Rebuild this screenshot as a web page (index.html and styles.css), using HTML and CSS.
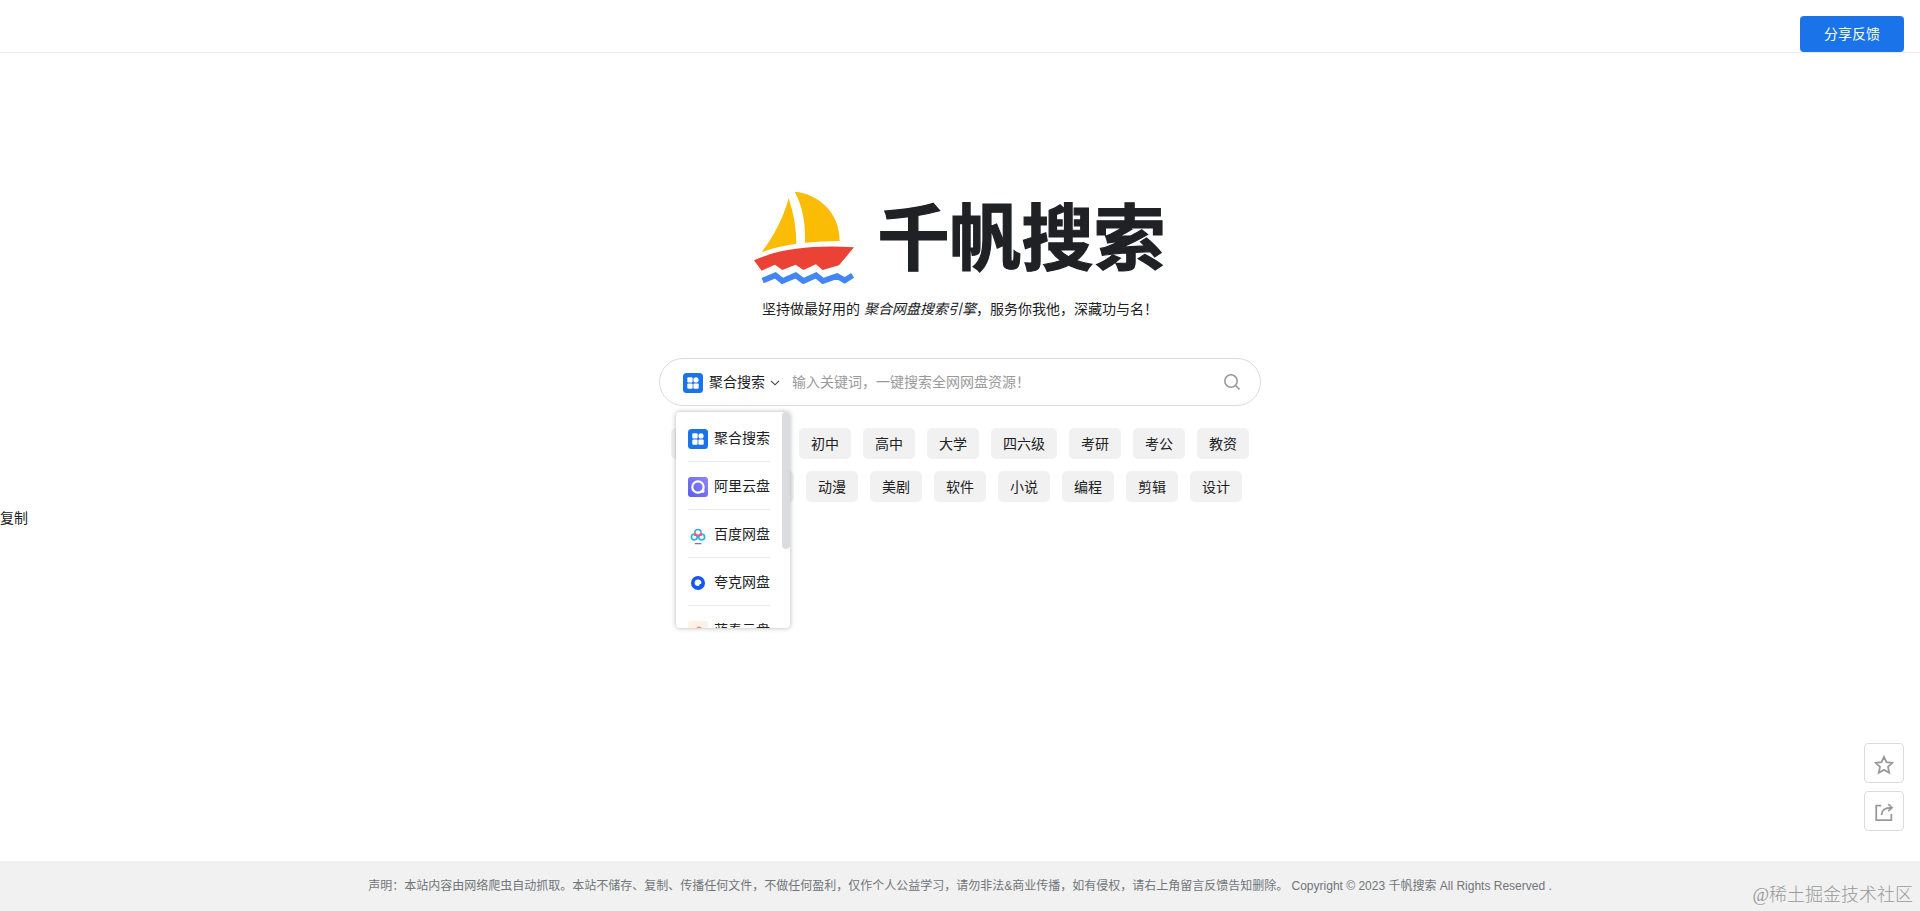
FILE: index.html
```html
<!DOCTYPE html>
<html lang="zh-CN">
<head>
    <meta charset="UTF-8">
    <meta name="viewport" content="width=device-width, initial-scale=1.0">
    <title>千帆搜索</title>
    <link rel="stylesheet" href="styles.css">
</head>
<body>
    <!-- shared icons -->
    <svg width="0" height="0" class="sprite">
        <symbol id="icon-all" viewBox="0 0 20 20">
            <rect width="20" height="20" rx="3.5" fill="#1a73e8"/>
            <rect x="4.3" y="4.3" width="5.3" height="5.3" rx="1" fill="#fff"/>
            <circle cx="13" cy="6.9" r="2.6" fill="#fff"/>
            <rect x="4.3" y="10.4" width="5.3" height="5.3" rx="1" fill="#fff"/>
            <rect x="10.4" y="10.4" width="5.3" height="5.3" rx="1" fill="#fff"/>
        </symbol>
    </svg>

    <header class="header">
        <button class="feedback">分享反馈</button>
    </header>

    <main class="main">
        <h1 class="logo">
            <svg class="logo-img" viewBox="27 30 300 279">
                <path fill="#fbbc05" d="M149 32C218 38 284 92 284 180Q230 180 180 185C182 130 174 78 149 32z"/>
                <path fill="#fbbc05" d="M131 52Q154 120 154 188Q100 195 50 213C84 170 114 115 131 52z"/>
                <path fill="#ea4335" d="M27 238C110 200 215 192 327 199L282 253L233 267L213 250L175 267L152 251L112 267L90 251L50 269z"/>
                <path fill="none" stroke="#4285f4" stroke-width="17" d="M53 299L91 283L112 300L152 283L175 300L213 283L234 300L276 285L299 298L323 283"/>
            </svg>
            <span>千帆搜索</span>
        </h1>
        <p class="slogan">坚持做最好用的 <em>聚合网盘搜索引擎</em>，服务你我他，深藏功与名！</p>

        <div class="search">
            <div class="current">
                <svg class="icon"><use href="#icon-all"/></svg>
                <span>聚合搜索</span>
                <svg class="arrow" viewBox="0 0 10 6"><path d="M1 .8l4 4 4-4"/></svg>
            </div>
            <input type="text" placeholder="输入关键词，一键搜索全网网盘资源！">
            <svg class="search-btn" viewBox="0 0 16 16"><circle cx="7" cy="7" r="6.2"/><path d="M11.3 11.3l4.2 4.2"/></svg>

            <div class="dropdown">
                <ul>
                    <li><svg class="icon"><use href="#icon-all"/></svg>聚合搜索</li>
                    <li>
                        <svg class="icon" viewBox="0 0 20 20">
                            <defs>
                                <linearGradient id="ali" x1="0" y1="1" x2="1" y2="0">
                                    <stop offset="0" stop-color="#5b5cf0"/>
                                    <stop offset="1" stop-color="#8f86f7"/>
                                </linearGradient>
                            </defs>
                            <rect width="20" height="20" rx="3" fill="url(#ali)"/>
                            <circle cx="10" cy="10" r="5.7" fill="none" stroke="#fff" stroke-width="2.2"/>
                            <path d="M12.6 13.2l4.4 .4-1.4 2.2-2.4 0z" fill="#fff"/>
                        </svg>阿里云盘
                    </li>
                    <li>
                        <svg class="icon" viewBox="0 0 20 20" fill="none" stroke-width="1.7">
                            <circle cx="6.3" cy="12" r="2.9" stroke="#29b6e8"/>
                            <circle cx="13.7" cy="12" r="2.9" stroke="#29b6e8"/>
                            <path d="M6.9 7.6a3.1 3.1 0 1 1 6.2 0" stroke="#35a9ee"/>
                            <path d="M6.9 7.6a3.1 3.1 0 0 0 6.2 0M7.6 9.4l-1.6 .8M12.4 9.4l1.6 .8" stroke="#ee5a76"/>
                            <path d="M6.8 18.6h4" stroke="#ee4a5e" stroke-width="1.3"/>
                            <path d="M10.8 18.6h2.6" stroke="#5674e8" stroke-width="1.3"/>
                        </svg>百度网盘
                    </li>
                    <li>
                        <svg class="icon" viewBox="0 0 20 20">
                            <circle cx="10" cy="10" r="7" fill="#1657f0"/>
                            <circle cx="10" cy="9.8" r="3.3" fill="#fff"/>
                            <circle cx="12.6" cy="12.4" r="1.4" fill="#1657f0"/>
                        </svg>夸克网盘
                    </li>
                    <li>
                        <svg class="icon" viewBox="0 0 20 20">
                            <rect width="20" height="20" rx="3" fill="#fdf1e8"/>
                            <circle cx="11" cy="8.5" r="3" fill="#f58a70"/>
                        </svg>蓝奏云盘
                    </li>
                </ul>
                <i class="scrollbar"></i>
            </div>
        </div>

        <div class="tags">
            <a>幼教</a><a>小学</a><a>初中</a><a>高中</a><a>大学</a><a>四六级</a><a>考研</a><a>考公</a><a>教资</a>
        </div>
        <div class="tags">
            <a>电影</a><a>电视</a><a>动漫</a><a>美剧</a><a>软件</a><a>小说</a><a>编程</a><a>剪辑</a><a>设计</a>
        </div>
    </main>

    <div class="copy">复制</div>

    <div class="side">
        <a><svg viewBox="0 0 18 18"><path d="M9 1.6l2.2 4.9 5.3.6-3.9 3.6 1.1 5.3L9 13.4 4.3 16l1.1-5.3L1.5 7.1l5.3-.6z"/></svg></a>
        <a><svg viewBox="0 0 18 18"><path d="M6.5 2.4H2v13h13.6V10"/><path d="M6.8 10.8C6.8 6.6 9 4.2 16 4.2M12.8 1l3.4 3.2-3.4 3.2"/></svg></a>
    </div>

    <footer class="footer">
        声明：本站内容由网络爬虫自动抓取。本站不储存、复制、传播任何文件，不做任何盈利，仅作个人公益学习，请勿非法&amp;商业传播，如有侵权，请右上角留言反馈告知删除。 Copyright © 2023 千帆搜索 All Rights Reserved .
    </footer>
    <div class="watermark">@稀土掘金技术社区</div>
</body>
</html>
```
FILE: styles.css
```css
* {
    box-sizing: border-box;
    margin: 0;
    padding: 0;
}
body {
    height: 100vh;
    display: flex;
    flex-direction: column;
    overflow: hidden;
    font-family: "Liberation Sans", "Noto Sans CJK SC", sans-serif;
    font-size: 14px;
    line-height: 20px;
    color: #202124;
    background: #fff;
}
.sprite {
    position: absolute;
}
.header {
    height: 53px;
    flex: none;
    display: flex;
    justify-content: flex-end;
    align-items: flex-end;
    padding-right: 16px;
    border-bottom: 1px solid #ebebeb;
}
.feedback {
    width: 104px;
    height: 36px;
    border: 0;
    border-radius: 4px;
    background: #1a73e8;
    color: #fff;
    font: inherit;
}
.main {
    display: flex;
    flex-direction: column;
    align-items: center;
    padding-top: 131px;
}
.logo {
    height: 106px;
    display: flex;
    align-items: center;
    gap: 23px;
    font-size: 72px;
    font-weight: 700;
    line-height: 106px;
}
.logo span {
    padding-top: 3px;
    -webkit-text-stroke: 1.2px #202124;
}
.logo-img {
    width: 100px;
    height: 93px;
}
.slogan {
    margin-top: 9px;
}
.search {
    position: relative;
    width: 602px;
    height: 48px;
    margin-top: 39px;
    padding: 0 20px 0 23px;
    display: flex;
    align-items: center;
    border: 1px solid #dadce0;
    border-radius: 24px;
}
.current {
    display: flex;
    align-items: center;
    gap: 6px;
}
.icon {
    width: 20px;
    height: 20px;
    margin-top: 2px;
    flex: none;
}
.arrow {
    width: 10px;
    height: 6px;
    margin: 2px 1px 0 -1px;
    fill: none;
    stroke: #3c4043;
    stroke-width: 1.1;
}
.search input {
    flex: 1;
    margin-left: 11px;
    border: 0;
    outline: 0;
    font: inherit;
    background: none;
}
.search input::placeholder {
    color: #9a9a9a;
}
.search-btn {
    width: 16px;
    height: 16px;
    fill: none;
    stroke: #9a9a9a;
    stroke-width: 1.6;
}
/* source list, opens over the tags */
.dropdown {
    position: absolute;
    top: 53px;
    left: 16px;
    z-index: 2;
    width: 114px;
    height: 216px;
    padding: 2px 20px 0 12px;
    overflow: hidden;
    border-radius: 4px;
    background: #fff;
    box-shadow: 0 0 5px rgba(0, 0, 0, .3);
}
.dropdown ul {
    list-style: none;
}
.dropdown li {
    height: 48px;
    display: flex;
    align-items: center;
    gap: 6px;
    white-space: nowrap;
    border-bottom: 1px solid #ebebeb;
}
.scrollbar {
    position: absolute;
    top: 0;
    right: 0;
    width: 8px;
    height: 137px;
    border-radius: 4px;
    background: #dadce0;
}
.tags {
    display: flex;
    gap: 12px;
    margin-top: 22px;
}
.tags + .tags {
    margin-top: 12px;
}
.tags a {
    height: 31px;
    padding: 0 12px;
    line-height: 32px;
    border-radius: 5px;
    background: #f1f1f1;
}
.copy {
    margin-top: 6px;
}
.side {
    margin: auto 16px 30px auto;
    display: flex;
    flex-direction: column;
    gap: 8px;
}
.side a {
    width: 40px;
    height: 40px;
    display: flex;
    align-items: center;
    justify-content: center;
    border: 1px solid #dadce0;
    border-radius: 4px;
}
.side svg {
    width: 20px;
    height: 20px;
    margin-top: 3px;
    fill: none;
    stroke: #9a9a9a;
    stroke-width: 1.6;
}
.footer {
    height: 50px;
    flex: none;
    line-height: 50px;
    text-align: center;
    font-size: 12px;
    color: #70757a;
    background: #f1f1f1;
}
.watermark {
    position: absolute;
    right: 7px;
    bottom: 4px;
    font-family: "Liberation Serif", "Noto Sans CJK SC", serif;
    font-size: 18px;
    font-weight: 300;
    line-height: 24px;
    color: #999;
}
```
